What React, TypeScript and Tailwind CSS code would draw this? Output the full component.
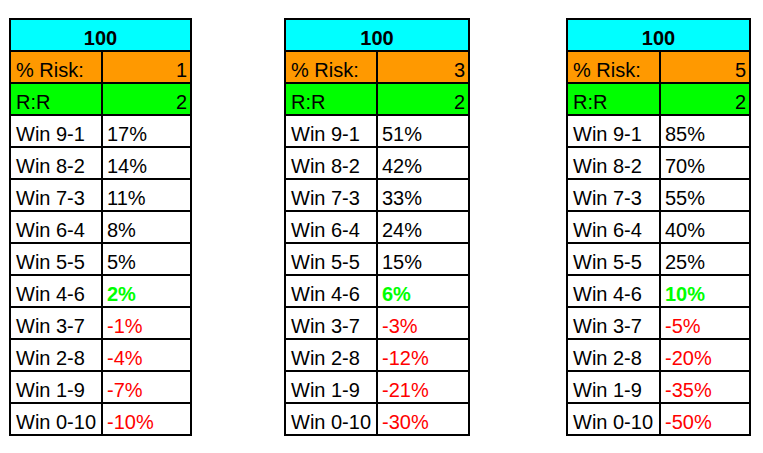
import React from "react";

type Row = { label: string; value: string; kind: "pos" | "neg" | "zero" };

const labels = ["Win 9-1", "Win 8-2", "Win 7-3", "Win 6-4", "Win 5-5", "Win 4-6", "Win 3-7", "Win 2-8", "Win 1-9", "Win 0-10"];

const data: { risk: string; values: string[]; w: string; c1: string; ml: string }[] = [
  { risk: "1", values: ["17%", "14%", "11%", "8%", "5%", "2%", "-1%", "-4%", "-7%", "-10%"], w: "w-[183px]", c1: "w-[90px]", ml: "ml-[9px]" },
  { risk: "3", values: ["51%", "42%", "33%", "24%", "15%", "6%", "-3%", "-12%", "-21%", "-30%"], w: "w-[186px]", c1: "w-[90px]", ml: "ml-[92px]" },
  { risk: "5", values: ["85%", "70%", "55%", "40%", "25%", "10%", "-5%", "-20%", "-35%", "-50%"], w: "w-[185px]", c1: "w-[91px]", ml: "ml-[96px]" },
];

function Table({ risk, values, w, c1, ml }: { risk: string; values: string[]; w: string; c1: string; ml: string }) {
  return (
    <div className={`${w} ${ml} shrink-0 border-2 border-black`}>
      <div className="h-[30px] bg-[#00ffff] flex items-end justify-center pb-[1px] font-bold leading-[22px]">100</div>
      <div className="h-[32px] border-t-2 border-black flex bg-[#ff9900]">
        <div className={`${c1} shrink-0 flex items-end pl-[5px] pb-[1px] leading-[22px]`}>% Risk:</div>
        <div className="flex-1 border-l-2 border-black flex items-end justify-end pr-[3px] pb-[1px] leading-[22px]">{risk}</div>
      </div>
      <div className="h-[32px] border-t-2 border-black flex bg-[#00ff00]">
        <div className={`${c1} shrink-0 flex items-end pl-[5px] pb-[1px] leading-[22px]`}>R:R</div>
        <div className="flex-1 border-l-2 border-black flex items-end justify-end pr-[3px] pb-[1px] leading-[22px]">2</div>
      </div>
      {labels.map((l, i) => {
        const v = values[i];
        const cls = i === 5 ? "text-[#00ff00] font-bold" : i > 5 ? "text-[#ff0000]" : "text-black";
        return (
          <div key={l} className="h-[32px] border-t-2 border-black flex bg-white">
            <div className={`${c1} shrink-0 flex items-end pl-[5px] pb-[1px] leading-[22px]`}>{l}</div>
            <div className={`flex-1 border-l-2 border-black flex items-end pl-[4px] pb-[1px] leading-[22px] ${cls}`}>{v}</div>
          </div>
        );
      })}
    </div>
  );
}

export default function App() {
  return (
    <div className="w-[763px] h-[453px] bg-white pt-[18px] flex items-start text-[20px] text-black" style={{ fontFamily: '"Liberation Sans", Arial, sans-serif' }}>
      {data.map((d) => (
        <Table key={d.risk} {...d} />
      ))}
    </div>
  );
}
